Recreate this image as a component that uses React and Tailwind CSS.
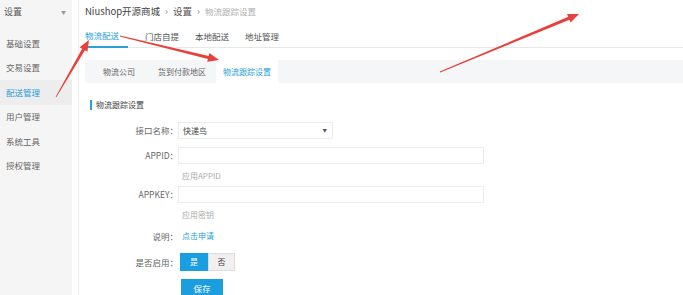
import React from 'react';

const menu = ['基础设置', '交易设置', '配送管理', '用户管理', '系统工具', '授权管理'];

// tapered red arrow, tail -> tip
const arrowPoints = (x1, y1, x2, y2) => {
  const dx = x2 - x1;
  const dy = y2 - y1;
  const len = Math.hypot(dx, dy);
  const ux = dx / len;
  const uy = dy / len;
  const nx = -uy;
  const ny = ux;
  const headLen = 11;
  const bx = x2 - ux * headLen;
  const by = y2 - uy * headLen;
  const pts = [
    [x1 + nx * 0.4, y1 + ny * 0.4],
    [bx + nx * 1.6, by + ny * 1.6],
    [bx + nx * 4.5, by + ny * 4.5],
    [x2, y2],
    [bx - nx * 4.5, by - ny * 4.5],
    [bx - nx * 1.6, by - ny * 1.6],
    [x1 - nx * 0.4, y1 - ny * 0.4],
  ];
  return pts.map((p) => p.map((v) => v.toFixed(1)).join(',')).join(' ');
};

const Arrows = () => (
  <svg className="absolute inset-0 pointer-events-none" width="683" height="295" viewBox="0 0 683 295">
    <polygon points={arrowPoints(56, 97, 89, 40)} fill="#e8403a" />
    <polygon points={arrowPoints(120, 36, 219, 60)} fill="#e8403a" />
    <polygon points={arrowPoints(440, 72, 579, 14)} fill="#e8403a" />
  </svg>
);

const Sidebar = () => (
  <aside className="w-[72px] shrink-0 bg-[#f5f5f5] text-[8.5px] text-[#666]">
    <div className="h-[24px] flex items-center justify-between pl-[4px] pr-[6px] text-[9px] text-[#555]">
      <span>设置</span>
      <span className="text-[5px] text-[#999]">▼</span>
    </div>
    <div className="mt-[7px]">
      {menu.map((m) => (
        <div
          key={m}
          className={`h-[24.5px] flex items-center pl-[6px] ${m === '配送管理' ? 'bg-[#ededed] text-[#2a9fd8]' : ''}`}
        >
          {m}
        </div>
      ))}
    </div>
  </aside>
);

const Row = ({ label, children, className = '' }) => (
  <div className={`flex items-center ${className}`}>
    <div className="w-[93px] text-right text-[#666]">{label}</div>
    {children}
  </div>
);

export default function App() {
  return (
    <div
      className="relative w-[683px] h-[295px] overflow-hidden bg-white flex text-[#444]"
      style={{ fontFamily: '"Noto Sans CJK SC", "Liberation Sans", sans-serif' }}
    >
      <Sidebar />
      <div className="w-[6px] shrink-0" />
      <main className="flex-1 border-l border-[#ececec] pl-[6px]">
        {/* breadcrumb */}
        <div className="h-[23px] flex items-center gap-[5px] text-[9.5px]">
          <span className="text-[#444]">Niushop开源商城</span>
          <span className="text-[#777]">›</span>
          <span className="text-[#555]">设置</span>
          <span className="text-[#777]">›</span>
          <span className="text-[#b0b0b0] text-[8.5px]">物流跟踪设置</span>
        </div>

        {/* tabs */}
        <div className="h-[25px] flex border-b border-[#e8e8e8] text-[8.5px]">
          <div className="h-[25px] pt-[2px] flex items-center border-b-2 border-[#2a9fd8] text-[#2a9fd8] -mb-px w-[43px]">
            物流配送
          </div>
          <div className="pt-[2px] flex items-center ml-[17px] text-[#555]">门店自提</div>
          <div className="pt-[2px] flex items-center ml-[16px] text-[#555]">本地配送</div>
          <div className="pt-[2px] flex items-center ml-[16px] text-[#555]">地址管理</div>
        </div>

        {/* sub tabs */}
        <div className="mt-[12px] h-[23px] bg-[#f5f6f8] flex items-stretch text-[8px] text-[#666]">
          <div className="flex items-center pl-[18px]">物流公司</div>
          <div className="flex items-center ml-[23px]">货到付款地区</div>
          <div className="flex items-center ml-[10px] px-[7px] bg-white text-[#2a9fd8]">物流跟踪设置</div>
        </div>

        {/* section title */}
        <div className="mt-[17px] h-[10px] flex items-center pl-[5px] text-[8px] text-[#444]">
          <span className="w-[2px] h-[10px] bg-[#2a9fd8] mr-[4px]" />
          物流跟踪设置
        </div>

        <div className="text-[8.5px]">
          <Row label="接口名称：" className="mt-[12px] h-[17px]">
            <div className="w-[155px] h-[17px] border border-[#ececec] flex items-center justify-between pl-[4px] pr-[5px] text-[#444] text-[8px]">
              <span>快递鸟</span>
              <span className="text-[4.5px] text-[#555]">▼</span>
            </div>
          </Row>
          <Row label="APPID：" className="mt-[8px] h-[17px]">
            <div className="w-[306px] h-[17px] border border-[#ececec]" />
          </Row>
          <Row label="" className="mt-[6px] h-[12px]">
            <span className="pl-[4px] text-[#aaa] text-[8px]">应用APPID</span>
          </Row>
          <Row label="APPKEY：" className="mt-[4px] h-[17px]">
            <div className="w-[306px] h-[17px] border border-[#ececec]" />
          </Row>
          <Row label="" className="mt-[6px] h-[12px]">
            <span className="pl-[4px] text-[#aaa] text-[8px]">应用密钥</span>
          </Row>
          <Row label="说明：" className="mt-[8px] h-[14px]">
            <span className="pl-[4px] text-[#2a9fd8] text-[8px]">点击申请</span>
          </Row>
          <Row label="是否启用：" className="mt-[10px] h-[18px]">
            <div className="flex ml-[2px] text-[8px]">
              <div className="w-[28px] h-[18px] flex items-center justify-center bg-[#1a9ee0] text-white">是</div>
              <div className="w-[27px] h-[18px] flex items-center justify-center bg-[#f0f0f0] border border-[#dcdcdc] text-[#444]">否</div>
            </div>
          </Row>
          <Row label="" className="mt-[8px] h-[18px]">
            <div className="ml-[3px] w-[42px] h-[18px] flex items-center justify-center bg-[#1a9ee0] text-white text-[8.5px]">
              保存
            </div>
          </Row>
        </div>
      </main>
      <Arrows />
    </div>
  );
}
